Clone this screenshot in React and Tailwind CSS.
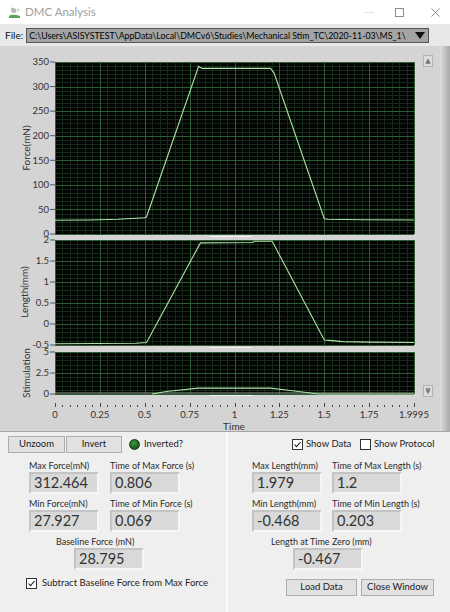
import React from 'react';

const X0 = 55;
const PW = 359;
const tx = (t) => X0 + (t / 1.9995) * PW;
const MAJOR = '#2e5c35';
const MINOR = '#14291a';
const LINE = '#acE4a4';

const forceY = (v) => 16 + ((350 - v) / 350) * 172;
const lenY = (v) => 194 + ((2 - v) / 2.5) * 105;
const stimY = (v) => 306 + ((5 - v) / 5) * 42;

const forceData = [
  [0, 28], [0.2, 28.5], [0.35, 30], [0.5, 33], [0.51, 35], [0.8, 341], [0.82, 337],
  [1.2, 337], [1.22, 328], [1.5, 31], [1.52, 30], [1.7, 29], [1.9995, 28.5],
];
const lengthData = [
  [0, -0.47], [0.45, -0.46], [0.51, -0.44], [0.81, 1.93], [1.1, 1.94], [1.11, 1.97],
  [1.21, 1.97], [1.5, -0.38], [1.53, -0.39], [1.6, -0.42], [1.75, -0.43], [1.9995, -0.44],
];
const stimData = [
  [0.54, 0], [0.62, 0.3], [0.8, 0.7], [1.2, 0.7], [1.3, 0.45], [1.47, 0], [1.9995, 0],
];

const pts = (data, fy) => data.map(([t, v]) => `${tx(t).toFixed(1)},${fy(v).toFixed(1)}`).join(' ');

const Grid = ({ top, h, yMajors, ySub }) => {
  const minor = [];
  const major = [];
  for (let i = 0; i <= 48; i++) {
    const x = Math.round(X0 + (i * PW) / 48) + 0.5;
    (i % 6 === 0 ? major : minor).push(<line key={'v' + i} x1={x} x2={x} y1={top} y2={top + h} />);
  }
  const n = yMajors * ySub;
  for (let j = 0; j <= n; j++) {
    const y = Math.round(top + (j * h) / n) + 0.5;
    (j % ySub === 0 ? major : minor).push(<line key={'h' + j} x1={X0} x2={X0 + PW} y1={y} y2={y} />);
  }
  return (
    <g shapeRendering="crispEdges">
      <rect x={X0} y={top} width={PW} height={h} fill="#020402" />
      <g stroke={MINOR}>{minor}</g>
      <g stroke={MAJOR}>{major}</g>
    </g>
  );
};

const YTicks = ({ values, fy }) =>
  values.map(([label, v]) => (
    <g key={label}>
      <line x1={50} x2={55} y1={fy(v)} y2={fy(v)} stroke="#555" />
      <text x={49} y={fy(v) + 3.3} textAnchor="end">{label}</text>
    </g>
  ));

const Chart = () => {
  const xTicks = [];
  for (let i = 0; i <= 48; i++) {
    const x = Math.round(X0 + (i * PW) / 48) + 0.5;
    xTicks.push(
      <line key={i} x1={x} x2={x} y1={i % 6 === 0 ? 357 : 358.5} y2={361} stroke="#444" />
    );
  }
  const xLabels = ['0', '0.25', '0.5', '0.75', '1', '1.25', '1.5', '1.75', '1.9995'];
  return (
    <svg width="418" height="385" overflow="visible" className="text-[9.5px] fill-[#333]">
      <Grid top={16} h={172} yMajors={7} ySub={6} />
      <Grid top={194} h={105} yMajors={5} ySub={5} />
      <Grid top={306} h={42} yMajors={2} ySub={5} />

      <line x1={210} x2={252} y1={190.5} y2={190.5} stroke="#f2f2f2" />
      <line x1={210} x2={252} y1={301.5} y2={301.5} stroke="#f2f2f2" />
      <line x1={210} x2={252} y1={349.5} y2={349.5} stroke="#f2f2f2" />

      <polyline points={pts(forceData, forceY)} fill="none" stroke={LINE} strokeWidth="1.1" />
      <polyline points={pts(lengthData, lenY)} fill="none" stroke={LINE} strokeWidth="1.1" />
      <line x1={X0} x2={X0 + PW} y1={347} y2={347} stroke="#8c9a8c" strokeWidth="1.2" />
      <polyline points={pts(stimData, stimY)} fill="none" stroke={LINE} strokeWidth="1.1" />

      <YTicks
        fy={forceY}
        values={[['350', 350], ['300', 300], ['250', 250], ['200', 200], ['150', 150], ['100', 100], ['50', 50], ['0', 0]]}
      />
      <YTicks fy={lenY} values={[['2', 2], ['1.5', 1.5], ['1', 1], ['0.5', 0.5], ['0', 0], ['-0.5', -0.5]]} />
      <YTicks fy={stimY} values={[['5', 5], ['2.5', 2.5], ['0', 0]]} />

      <text x={27} y={102} transform="rotate(-90 27 102)" textAnchor="middle" dominantBaseline="middle" fontSize="10">
        Force(mN)
      </text>
      <text x={25} y={246} transform="rotate(-90 25 246)" textAnchor="middle" dominantBaseline="middle" fontSize="10">
        Length(mm)
      </text>
      <text x={27} y={327} transform="rotate(-90 27 327)" textAnchor="middle" dominantBaseline="middle" fontSize="10">
        Stimulation
      </text>

      <g shapeRendering="crispEdges">{xTicks}</g>
      {xLabels.map((l, i) => (
        <text key={l} x={X0 + (i * PW) / 8} y={372} textAnchor="middle">{l}</text>
      ))}
      <text x={234} y={384} textAnchor="middle" fontSize="10">Time</text>
    </svg>
  );
};

const Btn = ({ children, className }) => (
  <div
    className={`flex items-center justify-center h-[17px] bg-[#e1e1e1] border border-[#adadad] text-[9.5px] text-[#1a1a1a] whitespace-nowrap ${className}`}
  >
    {children}
  </div>
);

const Field = ({ label, value }) => (
  <div className="flex flex-col">
    <div className="h-[13px] text-[9px] leading-[13px] text-[#2a2a2a] whitespace-nowrap">{label}</div>
    <Box value={value} />
  </div>
);

const Box = ({ value }) => (
  <div className="h-[22px] w-[70px] bg-[#d9d9d9] border-2 border-t-[#c4c4c4] border-l-[#c4c4c4] border-r-[#f6f6f6] border-b-[#f6f6f6] text-[14.5px] leading-[18px] pl-[3px] text-[#333]">
    {value}
  </div>
);

const Check = ({ checked }) => (
  <div className="w-[11px] h-[11px] bg-white border border-[#333] flex items-center justify-center shrink-0">
    {checked && (
      <svg width="9" height="9" viewBox="0 0 9 9">
        <path d="M1.5 4.5 L3.5 6.7 L7.6 2" fill="none" stroke="#222" strokeWidth="1.1" />
      </svg>
    )}
  </div>
);

const Arrow = ({ down }) => (
  <div className="w-[10px] h-[12px] bg-[#dddddd] border border-[#b4b4b4] flex items-center justify-center">
    <svg width="6" height="6" viewBox="0 0 6 6">
      {down ? (
        <path d="M0.5 0.5 H5.5 M1 1.8 L5 1.8 L3 5.5 Z" stroke="#777" fill="#777" strokeWidth="0.8" />
      ) : (
        <path d="M1 5 L5 5 L3 1 Z M0.5 5.6 H5.5" stroke="#777" fill="#777" strokeWidth="0.8" />
      )}
    </svg>
  </div>
);

export default function App() {
  return (
    <div className="w-[450px] h-[612px] bg-[#efefef] font-['Lato',sans-serif] text-[#222] overflow-hidden">
      {/* title bar */}
      <div className="h-[24px] bg-white flex items-center">
        <svg width="13" height="13" viewBox="0 0 13 13" className="ml-[8px]">
          <path d="M3 2 C6 1 9 3 8 6 C7 8 4 7 3 5 Z" fill="#b9b9b9" />
          <path d="M1 10 C4 8 8 9 12 10 L12 12 L1 12 Z" fill="#5aa35a" />
          <circle cx="10" cy="4" r="1.5" fill="#d0d0d0" />
        </svg>
        <span className="ml-[4px] text-[11.5px] text-[#a0a0a0]">DMC Analysis</span>
        <div className="ml-auto mr-[10px] flex items-center">
          <div className="w-[10px] h-px bg-[#e0e0e0]" />
          <div className="ml-[21px] w-[9px] h-[9px] border border-[#8a8a8a]" />
          <svg width="9" height="9" viewBox="0 0 9 9" className="ml-[27px]">
            <path d="M0.5 0.5 L8.5 8.5 M8.5 0.5 L0.5 8.5" stroke="#8a8a8a" strokeWidth="1" />
          </svg>
        </div>
      </div>

      {/* file row */}
      <div className="h-[22px] bg-[#e8e8e8] flex items-center">
        <span className="ml-[5px] text-[10px] text-[#111]">File:</span>
        <div className="ml-[3px] w-[403px] h-[15px] bg-[#a4a4a4] border border-[#555] flex items-center">
          <span className="ml-[2px] text-[8.8px] leading-[13px] text-black whitespace-nowrap overflow-hidden flex-1">
            C:\Users\ASISYSTEST\AppData\Local\DMCv6\Studies\Mechanical Stim_TC\2020-11-03\MS_1\
          </span>
          <svg width="10" height="7" viewBox="0 0 10 7" className="mx-[3px] shrink-0">
            <path d="M0 0 H10 L5 7 Z" fill="#111" />
          </svg>
        </div>
      </div>

      {/* chart panel */}
      <div className="h-[386px] bg-[#d4d4d4] border-b border-[#a6a6a6] flex">
        <Chart />
        <div className="w-[22px] flex flex-col justify-between pl-[5px] pt-[9px] pb-[34px]">
          <Arrow />
          <Arrow down />
        </div>
        <div className="w-[10px] bg-gradient-to-r from-[#dedede] to-[#a9a9a9]" />
      </div>

      {/* lower panel */}
      <div className="h-[180px] flex">
        <div className="w-[226px] flex flex-col">
          <div className="flex items-center mt-[4px] ml-[8px] h-[16px]">
            <Btn className="w-[57px]">Unzoom</Btn>
            <Btn className="w-[56px] ml-px">Invert</Btn>
            <div className="ml-[7px] w-[11px] h-[11px] rounded-full bg-[radial-gradient(circle_at_40%_35%,#3f9a3f,#0b3d0b)] border border-[#1c3a1c]" />
            <span className="ml-[4px] text-[9.5px]">Inverted?</span>
          </div>
          <div className="grid grid-cols-[70px_70px] gap-x-[11px] gap-y-[3px] ml-[29px] mt-[7px]">
            <Field label="Max Force(mN)" value="312.464" />
            <Field label="Time of Max Force (s)" value="0.806" />
            <Field label="Min Force(mN)" value="27.927" />
            <Field label="Time of Min Force (s)" value="0.069" />
          </div>
          <div className="ml-[56px] mt-[3px] h-[13px] text-[9px] leading-[13px] text-[#2a2a2a]">Baseline Force (mN)</div>
          <div className="ml-[74px]">
            <Box value="28.795" />
          </div>
          <div className="flex items-center ml-[26px] mt-[7px]">
            <Check checked />
            <span className="ml-[5px] text-[9.5px] leading-[12px] whitespace-nowrap">
              Subtract Baseline Force from Max Force
            </span>
          </div>
        </div>

        <div className="w-[2px] bg-[#fafafa]" />

        <div className="flex-1 flex flex-col">
          <div className="flex items-center mt-[4px] ml-[64px] h-[16px]">
            <div className="w-[68px] flex items-center">
              <Check checked />
              <span className="ml-[3px] text-[9.5px] whitespace-nowrap">Show Data</span>
            </div>
            <Check />
            <span className="ml-[3px] text-[9.5px] whitespace-nowrap">Show Protocol</span>
          </div>
          <div className="grid grid-cols-[70px_70px] gap-x-[10px] gap-y-[3px] ml-[24px] mt-[7px]">
            <Field label="Max Length(mm)" value="1.979" />
            <Field label="Time of Max Length (s)" value="1.2" />
            <Field label="Min Length(mm)" value="-0.468" />
            <Field label="Time of Min Length (s)" value="0.203" />
          </div>
          <div className="ml-[43px] mt-[3px] h-[13px] text-[9px] leading-[13px] text-[#2a2a2a]">
            Length at Time Zero (mm)
          </div>
          <div className="ml-[65px]">
            <Box value="-0.467" />
          </div>
          <div className="flex items-center ml-[58px] mt-[9px]">
            <Btn className="w-[71px]">Load Data</Btn>
            <Btn className="w-[73px] ml-[4px]">Close Window</Btn>
          </div>
        </div>
      </div>
    </div>
  );
}
